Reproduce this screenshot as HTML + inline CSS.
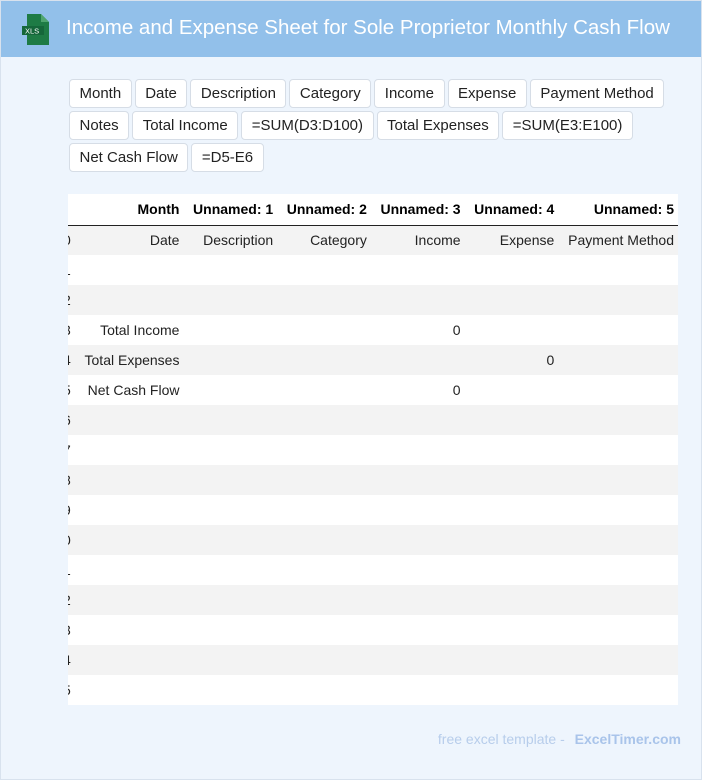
<!DOCTYPE html>
<html><head><style>
*{box-sizing:border-box;margin:0;padding:0}
body{width:702px;height:780px;background:#eef5fd;font-family:"Liberation Sans",Arial,sans-serif;position:relative;overflow:hidden}
.bd{position:absolute;left:0;top:0;width:702px;height:780px;border:1px solid #d8e2ee;pointer-events:none}
.hdr{position:absolute;left:0;top:0;width:702px;height:57px;background:#92c0ea}
.hdr h1{position:absolute;left:66px;top:16px;font-size:20.5px;font-weight:normal;color:#fff;white-space:nowrap}
.icon{position:absolute;left:22px;top:14px}
.tags{position:absolute;left:69px;top:79px;width:610px}
.tag{display:inline-block;float:left;height:29px;line-height:27px;padding:0 9.5px;margin:0 3px 3px 0;background:#fff;border:1px solid #d6dde6;border-radius:4px;font-size:15px;color:#222}
.br{clear:both}
.tw{position:absolute;left:68px;top:194px;width:610px;height:511px;overflow:hidden;background:#fff}
table{border-collapse:collapse;table-layout:fixed;margin-left:-40px;font-size:14px}
td,th{height:30px;text-align:right;padding:0 4px;white-space:nowrap;overflow:hidden;color:#222}
th{font-weight:bold;height:31px;border-bottom:1px solid #222;color:#000}
tr.g td{background:#f3f3f3}
.foot{position:absolute;right:21px;top:731px;font-size:14px;color:#b7cdeb}
.foot b{color:#a9c4ea;margin-left:6px}
</style></head><body>
<div class="hdr">
<svg class="icon" width="28" height="31" viewBox="0 0 28 31"><path d="M5 0h14l8 8v23H5z" fill="#1e7b45"/><path d="M19 0l8 8h-8z" fill="#4fa56f"/><rect x="0" y="12" width="22" height="9" fill="#15673a"/><text x="3" y="19.5" font-size="7.5" fill="#fff" font-family="Liberation Sans">XLS</text></svg>
<h1>Income and Expense Sheet for Sole Proprietor Monthly Cash Flow</h1>
</div>
<div class="tags">
<span class="tag">Month</span><span class="tag">Date</span><span class="tag">Description</span><span class="tag">Category</span><span class="tag">Income</span><span class="tag">Expense</span><span class="tag">Payment Method</span><div class="br"></div>
<span class="tag">Notes</span><span class="tag">Total Income</span><span class="tag">=SUM(D3:D100)</span><span class="tag">Total Expenses</span><span class="tag">=SUM(E3:E100)</span><div class="br"></div>
<span class="tag">Net Cash Flow</span><span class="tag">=D5-E6</span>
</div>
<div class="tw"><table>
<colgroup><col style="width:48px"><col style="width:109px"><col style="width:94px"><col style="width:94px"><col style="width:94px"><col style="width:94px"><col style="width:120px"></colgroup>
<tr><th></th><th>Month</th><th>Unnamed: 1</th><th>Unnamed: 2</th><th>Unnamed: 3</th><th>Unnamed: 4</th><th>Unnamed: 5</th></tr>
<tr class="g"><td>0</td><td>Date</td><td>Description</td><td>Category</td><td>Income</td><td>Expense</td><td>Payment Method</td></tr>
<tr><td>1</td><td></td><td></td><td></td><td></td><td></td><td></td></tr>
<tr class="g"><td>2</td><td></td><td></td><td></td><td></td><td></td><td></td></tr>
<tr><td>3</td><td>Total Income</td><td></td><td></td><td>0</td><td></td><td></td></tr>
<tr class="g"><td>4</td><td>Total Expenses</td><td></td><td></td><td></td><td>0</td><td></td></tr>
<tr><td>5</td><td>Net Cash Flow</td><td></td><td></td><td>0</td><td></td><td></td></tr>
<tr class="g"><td>6</td><td></td><td></td><td></td><td></td><td></td><td></td></tr>
<tr><td>7</td><td></td><td></td><td></td><td></td><td></td><td></td></tr>
<tr class="g"><td>8</td><td></td><td></td><td></td><td></td><td></td><td></td></tr>
<tr><td>9</td><td></td><td></td><td></td><td></td><td></td><td></td></tr>
<tr class="g"><td>10</td><td></td><td></td><td></td><td></td><td></td><td></td></tr>
<tr><td>11</td><td></td><td></td><td></td><td></td><td></td><td></td></tr>
<tr class="g"><td>12</td><td></td><td></td><td></td><td></td><td></td><td></td></tr>
<tr><td>13</td><td></td><td></td><td></td><td></td><td></td><td></td></tr>
<tr class="g"><td>14</td><td></td><td></td><td></td><td></td><td></td><td></td></tr>
<tr><td>15</td><td></td><td></td><td></td><td></td><td></td><td></td></tr>
</table></div>
<div class="foot">free excel template - <b>ExcelTimer.com</b></div>
<div class="bd"></div>
</body></html>
